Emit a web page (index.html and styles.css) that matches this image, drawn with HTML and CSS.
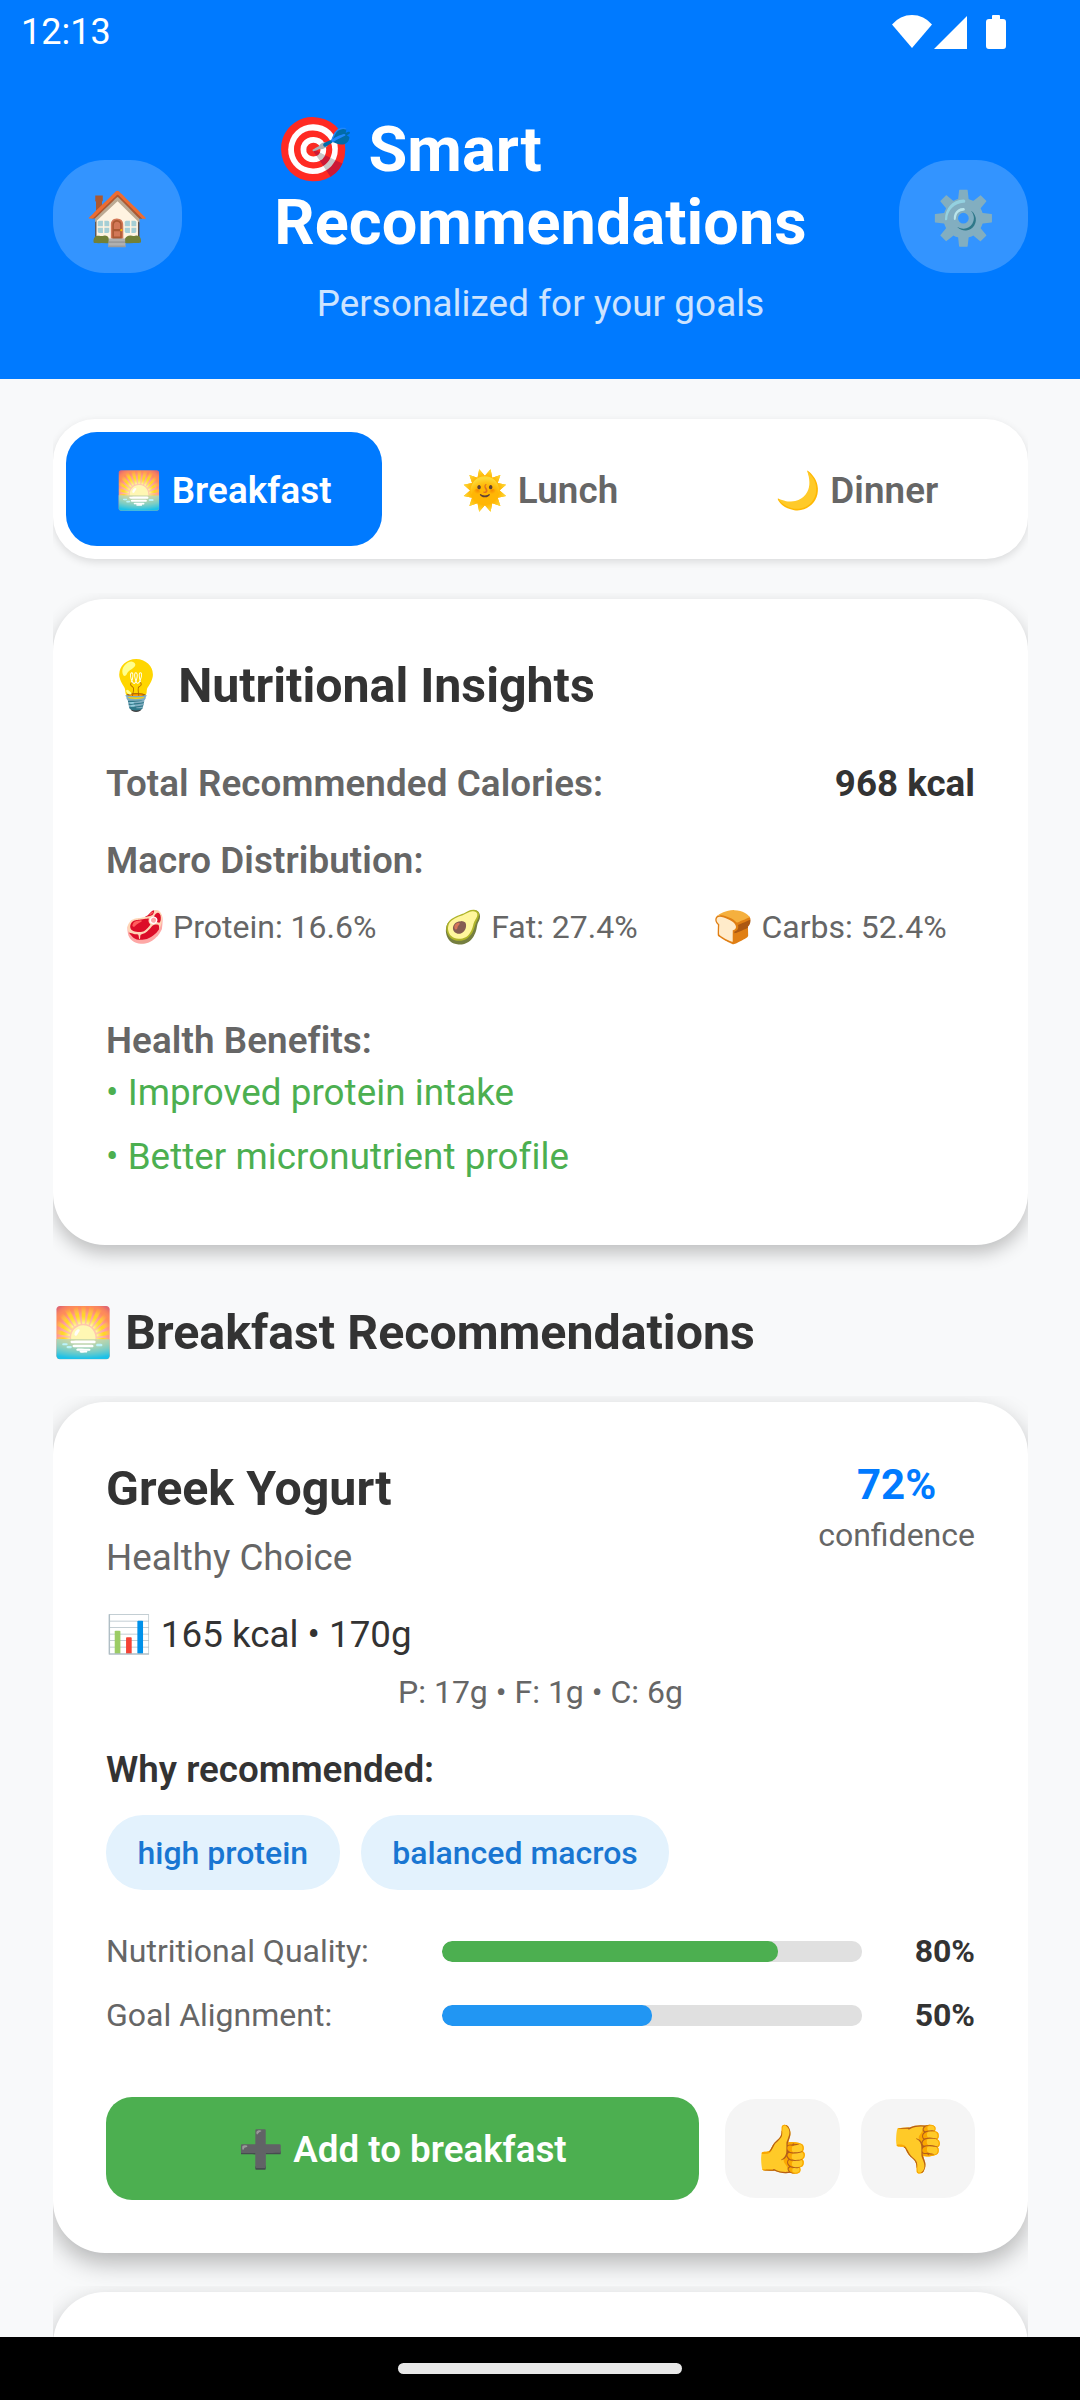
FILE: index.html
```html
<!DOCTYPE html>
<html lang="en">
<head>
<meta charset="utf-8">
<title>Smart Recommendations</title>
<link rel="stylesheet" href="styles.css">
</head>
<body>
<div class="app">
  <header class="header">
    <div class="status">
      <span class="time">12:13</span>
      <span class="status-icons">
        <svg class="ic-wifi" viewBox="0 0 40 34"><path d="M20 33 0 9.5A26 26 0 0 1 40 9.5z" fill="#fff"/></svg>
        <svg class="ic-signal" viewBox="0 0 33 33"><path d="M33 0v33H0z" fill="#fff"/></svg>
        <svg class="ic-batt" viewBox="0 0 20 34"><path d="M7 0h6a1 1 0 0 1 1 1v3h3a3 3 0 0 1 3 3v24a3 3 0 0 1-3 3H3a3 3 0 0 1-3-3V7a3 3 0 0 1 3-3h3V1a1 1 0 0 1 1-1z" fill="#fff"/></svg>
      </span>
    </div>
    <div class="head-row">
      <div class="head-btn">🏠</div>
      <div class="head-title">
        <h1 class="title">🎯 Smart<br>Recommendations</h1>
        <p class="subtitle">Personalized for your goals</p>
      </div>
      <div class="head-btn dim">⚙️</div>
    </div>
  </header>
  <main class="content">
    <nav class="tabs card-shadow">
      <div class="tab active">🌅 Breakfast</div>
      <div class="tab">🌞 Lunch</div>
      <div class="tab">🌙 Dinner</div>
    </nav>
    <section class="card insights">
      <h2 class="ins-title">💡 Nutritional Insights</h2>
      <div class="total"><span class="lab">Total Recommended Calories:</span><span class="val">968 kcal</span></div>
      <div class="lab macro-lab">Macro Distribution:</div>
      <div class="macros"><span class="macro">🥩 Protein: 16.6%</span><span class="macro">🥑 Fat: 27.4%</span><span class="macro">🍞 Carbs: 52.4%</span></div>
      <div class="lab ben-lab">Health Benefits:</div>
      <div class="benefit">• Improved protein intake</div>
      <div class="benefit">• Better micronutrient profile</div>
    </section>
    <h2 class="sec-title">🌅 Breakfast Recommendations</h2>
    <section class="card rec">
      <div class="rec-top">
        <div class="rec-name">
          <h3 class="food">Greek Yogurt</h3>
          <div class="brand">Healthy Choice</div>
        </div>
        <div class="conf"><div class="conf-val">72%</div><div class="conf-lab">confidence</div></div>
      </div>
      <div class="kcal">📊 165 kcal • 170g</div>
      <div class="pfc">P: 17g • F: 1g • C: 6g</div>
      <div class="why">Why recommended:</div>
      <div class="chips"><span class="chip">high protein</span><span class="chip">balanced macros</span></div>
      <div class="meter"><span class="m-lab">Nutritional Quality:</span><span class="track"><span class="fill green" style="width:80%"></span></span><span class="m-val">80%</span></div>
      <div class="meter"><span class="m-lab">Goal Alignment:</span><span class="track"><span class="fill blue" style="width:50%"></span></span><span class="m-val">50%</span></div>
      <div class="actions">
        <div class="add">➕ Add to breakfast</div>
        <div class="fb">👍</div>
        <div class="fb">👎</div>
      </div>
    </section>
    <section class="card rec"></section>
  </main>
  <footer class="navbar"><span class="pill"></span></footer>
</div>
</body>
</html>
```
FILE: styles.css
```css
* { box-sizing: border-box; }
html, body { margin: 0; padding: 0; }
body { font-family: Roboto, "Noto Color Emoji", sans-serif; background: #F8F9FA; color: #333; }
.app { width: 1080px; height: 2400px; display: flex; flex-direction: column; overflow: hidden; }

.header { height: 379px; flex: none; background: #007AFF; color: #fff; }
.status { height: 64px; padding: 0 74px 0 21px; display: flex; align-items: center; justify-content: space-between; }
.time { font-size: 36px; line-height: 64px; }
.status-icons { display: flex; align-items: center; gap: 2px; }
.ic-wifi { width: 40px; height: 34px; }
.ic-signal { width: 33px; height: 33px; }
.ic-batt { width: 20px; height: 34px; margin-left: 17px; }
.head-row { padding: 49px 52px 0 53px; display: flex; align-items: flex-start; justify-content: space-between; }
.head-btn { width: 129px; height: 113px; margin-top: 47px; padding-top: 4px; border-radius: 52px; background: rgba(255,255,255,.2); display: flex; align-items: center; justify-content: center; font-size: 52px; line-height: 60px; }
.head-title { display: flex; flex-direction: column; align-items: center; }
.title { margin: 0; font-size: 63px; line-height: 73px; font-weight: 700; text-align: left; letter-spacing: .05px; }
.subtitle { margin: 23px 0 0; font-size: 36.75px; line-height: 44px; color: #fff; opacity: .8; letter-spacing: .1px; }

.content { flex: 1; min-height: 0; overflow: hidden; padding: 40px 52px 0 53px; }
.tabs { height: 140px; padding: 13px; border-radius: 42px; background: #fff; display: flex; box-shadow: 0 3px 8px rgba(0,0,0,.12); clip-path: inset(-6px 0 -16px 0); }
.tab { flex: 1; padding-top: 2px; border-radius: 31px; display: flex; align-items: center; justify-content: center; font-size: 36.75px; font-weight: 600; color: #666; letter-spacing: .1px; }
.tab.active { background: #007AFF; color: #fff; }

.card { background: #fff; border-radius: 52px; padding: 53px; box-shadow: 0 10px 24px rgba(0,0,0,.28); clip-path: inset(-6px 0 -44px 0); }
.card.insights { margin-top: 40px; height: 646px; box-shadow: 0 8px 18px rgba(0,0,0,.24); }
.ins-title { margin: 6px 0 0; font-size: 48.3px; line-height: 56px; font-weight: 700; color: #333; }
.total { margin-top: 48px; display: flex; justify-content: space-between; line-height: 44px; font-size: 36.75px; }
.lab { font-size: 36.75px; font-weight: 600; color: #666; line-height: 44px; letter-spacing: .1px; }
.val { font-weight: 700; color: #333; }
.macro-lab { margin-top: 33px; }
.macros { margin-top: 22px; display: flex; font-size: 32px; line-height: 44px; color: #666; }
.macro { flex: 1; text-align: center; }
.ben-lab { margin-top: 70px; }
.benefit { font-size: 36.75px; line-height: 44px; color: #4CAF50; margin-top: 20px; letter-spacing: .06px; }
.ben-lab + .benefit { margin-top: 8px; }

.sec-title { margin: 60px 0 0; font-size: 48.3px; line-height: 56px; font-weight: 700; color: #333; }
.rec { margin-top: 39px; }
.sec-title + .rec { margin-top: 41px; height: 851px; }
.rec-top { display: flex; justify-content: space-between; align-items: flex-start; }
.rec-name { padding-top: 6px; }
.food { margin: 0; font-size: 48.3px; line-height: 56px; font-weight: 700; color: #333; }
.brand { margin-top: 19px; font-size: 36.75px; line-height: 44px; color: #666; }
.conf { text-align: center; padding-top: 5px; }
.conf-val { font-size: 42px; line-height: 50px; font-weight: 700; color: #007AFF; }
.conf-lab { margin-top: 5px; font-size: 32px; line-height: 40px; color: #666; }
.kcal { margin-top: 33px; font-size: 36.75px; line-height: 44px; color: #333; }
.pfc { margin-top: 15px; font-size: 32px; line-height: 40px; color: #666; text-align: center; }
.why { margin-top: 36px; font-size: 36.75px; line-height: 44px; font-weight: 600; color: #333; }
.chips { margin-top: 23px; display: flex; gap: 21px; }
.chip { height: 75px; padding: 0 31.5px; border-radius: 37px; background: #E3F2FD; color: #1976D2; font-size: 32px; font-weight: 500; display: flex; align-items: center; }
.meter { display: flex; align-items: center; height: 64px; }
.chips + .meter { margin-top: 29px; }
.m-lab { width: 336px; font-size: 32px; color: #666; }
.track { width: 420px; height: 21px; border-radius: 10px; background: #E0E0E0; display: block; overflow: hidden; }
.fill { display: block; height: 100%; border-radius: 10px; }
.green { background: #4CAF50; }
.blue { background: #2196F3; }
.m-val { flex: 1; text-align: right; font-size: 32px; font-weight: 700; color: #333; }
.actions { margin-top: 50px; display: flex; align-items: center; gap: 21px; }
.add { flex: 1; height: 103px; margin-right: 5px; padding-top: 2px; border-radius: 26px; background: #4CAF50; color: #fff; font-size: 36.75px; font-weight: 600; display: flex; align-items: center; justify-content: center; }
.fb { width: 114.5px; height: 99px; border-radius: 31px; background: #F5F5F5; display: flex; align-items: center; justify-content: center; font-size: 47px; }

.navbar { height: 63px; flex: none; background: #000; display: flex; align-items: center; justify-content: center; }
.pill { width: 284px; height: 11px; border-radius: 6px; background: #E8E8E8; }
```
